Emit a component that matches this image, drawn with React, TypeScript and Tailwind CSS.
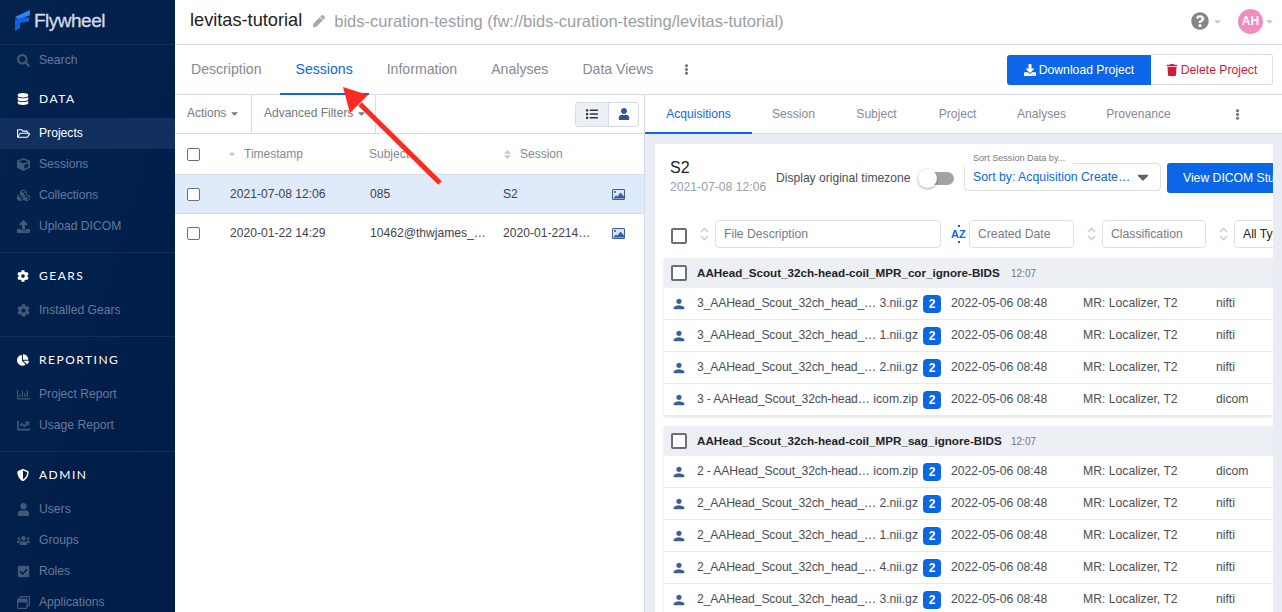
import type { ReactNode } from "react";
import { MdPerson } from "react-icons/md";
import {
  FaCaretDown,
  FaChartLine,
  FaChartPie,
  FaCheckSquare,
  FaCog,
  FaCube,
  FaCubes,
  FaDatabase,
  FaDownload,
  FaEllipsisV,
  FaList,
  FaPen,
  FaQuestionCircle,
  FaRegChartBar,
  FaRegFolderOpen,
  FaRegWindowRestore,
  FaSearch,
  FaShieldAlt,
  FaSort,
  FaTrash,
  FaUpload,
  FaUser,
  FaUsers,
} from "react-icons/fa";

function NavItem({ icon, label, active }: { icon: ReactNode; label: string; active?: boolean }) {
  return (
    <div
      className={`flex h-[31px] shrink-0 items-center text-[12.15px] ${
        active ? "bg-[#12305f] text-white" : "text-[#66799a]"
      }`}
    >
      <span className={`flex w-[39px] shrink-0 justify-center pl-[7px] text-[13px] ${active ? "text-white" : "text-[#435877]"}`}>
        {icon}
      </span>
      {label}
    </div>
  );
}

function NavHeading({ icon, label }: { icon: ReactNode; label: string }) {
  return (
    <div className="flex h-[42px] shrink-0 items-center pt-[4px] font-['Lato',sans-serif] text-[12px] tracking-[0.125em] text-white">
      <span className="flex w-[39px] shrink-0 justify-center pl-[7px] text-[12px]">{icon}</span>
      {label}
    </div>
  );
}

function Sidebar() {
  return (
    <aside className="flex h-[612px] w-[175px] shrink-0 flex-col overflow-hidden bg-gradient-to-br from-[#03234f] to-[#001c47]">
      <div className="flex h-[45px] shrink-0 items-center gap-[4px] border-b border-[#12305f] pb-[4px] pl-[15px]">
        <svg width="15" height="21" viewBox="0 0 15 21" aria-hidden="true">
          <path d="M0 7 L15 0 V5 L4 9.5 Z" fill="#2f86f5" />
          <path d="M0 9 L14 7 V11.5 L5 13 V18 L0 21 Z" fill="#0e62e0" />
        </svg>
        <span className="text-[19px] leading-none tracking-[-0.5px] text-[#d5dbe6] [-webkit-text-stroke:0.3px_#d5dbe6]">Flywheel</span>
      </div>
      <NavItem icon={<FaSearch />} label="Search" />
      <div className="flex shrink-0 flex-col border-b border-[#12305f] pb-[10px]">
        <NavHeading icon={<FaDatabase />} label="DATA" />
        <NavItem icon={<FaRegFolderOpen />} label="Projects" active />
        <NavItem icon={<FaCube />} label="Sessions" />
        <NavItem icon={<FaCubes />} label="Collections" />
        <NavItem icon={<FaUpload />} label="Upload DICOM" />
      </div>
      <div className="flex shrink-0 flex-col border-b border-[#12305f] pb-[10px]">
        <NavHeading icon={<FaCog />} label="GEARS" />
        <NavItem icon={<FaCog />} label="Installed Gears" />
      </div>
      <div className="flex shrink-0 flex-col border-b border-[#12305f] pb-[10px]">
        <NavHeading icon={<FaChartPie />} label="REPORTING" />
        <NavItem icon={<FaRegChartBar />} label="Project Report" />
        <NavItem icon={<FaChartLine />} label="Usage Report" />
      </div>
      <div className="flex shrink-0 flex-col">
        <NavHeading icon={<FaShieldAlt />} label="ADMIN" />
        <NavItem icon={<FaUser />} label="Users" />
        <NavItem icon={<FaUsers />} label="Groups" />
        <NavItem icon={<FaCheckSquare />} label="Roles" />
        <NavItem icon={<FaRegWindowRestore />} label="Applications" />
      </div>
    </aside>
  );
}

function Checkbox({ big }: { big?: boolean }) {
  return (
    <span
      className={`block shrink-0 bg-white ${
        big
          ? "h-[16px] w-[16px] rounded-[2px] border-2 border-[#6b6f75]"
          : "h-[13px] w-[13px] rounded-[2px] border border-[#6b6f75]"
      }`}
    />
  );
}

function PictureIcon() {
  return (
    <svg width="13" height="11" viewBox="0 0 13 11" aria-hidden="true">
      <rect x="0.5" y="0.5" width="12" height="10" rx="0.5" fill="#dbe6f5" stroke="#3a5f9c" />
      <circle cx="3" cy="3" r="1" fill="#2f5590" />
      <path d="M1 9.5 L4 6.5 L5.5 7.5 L8.5 3.5 L12 7.5 V9.5 Z" fill="#3a5f9c" />
    </svg>
  );
}

function SortChevrons() {
  return (
    <svg className="mt-[7px] shrink-0" width="13" height="14" viewBox="0 0 13 14" fill="none" stroke="#c9d0dc" strokeWidth="1.6" aria-hidden="true">
      <path d="M3 5 L6.5 1.5 L10 5" />
      <path d="M3 9 L6.5 12.5 L10 9" />
    </svg>
  );
}

function ProjectTabs() {
  const tabs = ["Description", "Sessions", "Information", "Analyses", "Data Views"];
  return (
    <div className="flex h-[50px] shrink-0 items-stretch border-b border-[#d5dbe8] pr-[9px]">
      <div className="flex gap-[2px]">
        {tabs.map((t) => (
          <div
            key={t}
            className={`-mb-px flex items-center border-b-2 px-[16px] pt-[1px] text-[14.1px] ${
              t === "Sessions" ? "border-[#0c67e8] text-[#0c67e8]" : "border-transparent text-[#858a92]"
            }`}
          >
            {t}
          </div>
        ))}
      </div>
      <div className="ml-[12px] flex items-center text-[11px] text-[#6f747b]">
        <FaEllipsisV />
      </div>
      <div className="ml-auto flex items-center">
        <button className="flex h-[30px] w-[144px] items-center justify-center gap-[3px] rounded-l-[3px] bg-[#0c67e8] pt-[2px] text-[12.2px] text-white">
          <FaDownload className="-mt-[2px] text-[12px]" />
          Download Project
        </button>
        <button className="flex h-[31px] w-[122px] items-center justify-center gap-[3px] rounded-r-[3px] border border-l-0 border-[#d9dde3] bg-white pt-[2px] text-[12.2px] text-[#d5183a]">
          <FaTrash className="-mt-[2px] text-[12px]" />
          Delete Project
        </button>
      </div>
    </div>
  );
}

function SessionRow({ time, subject, session, selected }: { time: string; subject: string; session: string; selected?: boolean }) {
  return (
    <div
      className={`flex h-[39px] shrink-0 items-center text-[12.1px] text-[#3f4348] ${
        selected ? "border-b border-[#d5dbe8] bg-[#dfeafa]" : "bg-white"
      }`}
    >
      <span className="ml-[12px] w-[43px]">
        <Checkbox />
      </span>
      <span className="w-[140px]">{time}</span>
      <span className="w-[133px]">{subject}</span>
      <span className="w-[109px]">{session}</span>
      <PictureIcon />
    </div>
  );
}

function SessionList() {
  return (
    <section className="flex w-[470px] shrink-0 flex-col border-r border-[#d5dbe8] bg-white">
      <div className="flex h-[39px] shrink-0 items-stretch border-b border-[#d5dbe8] text-[12px] text-[#74787f]">
        <div className="flex w-[77px] items-center gap-[3px] border-r border-[#d5dbe8] pb-[2px] pl-[12px]">
          Actions <FaCaretDown className="text-[11px]" />
        </div>
        <div className="flex w-[124px] items-center gap-[3px] border-r border-[#d5dbe8] pb-[2px] pl-[12px]">
          Advanced Filters <FaCaretDown className="text-[11px]" />
        </div>
        <div className="ml-auto mr-[5px] flex items-center">
          <div className="flex h-[25px] w-[64px] overflow-hidden rounded-[3px] border border-[#d5dbe8] text-[12px] text-[#2f5590]">
            <span className="flex w-[33px] items-center justify-center border-r border-[#d5dbe8] bg-[#eceff4] text-[#333]">
              <FaList />
            </span>
            <span className="flex flex-1 items-center justify-center">
              <FaUser />
            </span>
          </div>
        </div>
      </div>
      <div className="flex h-[41px] shrink-0 items-center border-b border-[#d5dbe8] text-[12px] text-[#858a92]">
        <span className="ml-[12px] w-[40px]">
          <Checkbox />
        </span>
        <span className="flex w-[142px] items-center gap-[7px]">
          <FaCaretDown className="text-[10px] text-[#c4c8ce]" />
          Timestamp
        </span>
        <span className="w-[133px]">Subject</span>
        <span className="flex items-center gap-[7px]">
          <FaSort className="text-[11px] text-[#c4c8ce]" />
          Session
        </span>
      </div>
      <SessionRow time="2021-07-08 12:06" subject="085" session="S2" selected />
      <SessionRow time="2020-01-22 14:29" subject="10462@thwjames_…" session="2020-01-2214…" />
    </section>
  );
}

function DetailTabs() {
  const tabs = [
    { label: "Acquisitions", w: "w-[107px]" },
    { label: "Session", w: "w-[83px]" },
    { label: "Subject", w: "w-[83px]" },
    { label: "Project", w: "w-[79px]" },
    { label: "Analyses", w: "w-[89px]" },
    { label: "Provenance", w: "w-[105px]" },
  ];
  return (
    <div className="flex h-[39px] shrink-0 items-stretch border-b border-[#d5dbe8] bg-white text-[12.1px]">
      {tabs.map((t) => (
        <div
          key={t.label}
          className={`-mb-px flex items-center justify-center border-b-2 pt-[1px] ${t.w} ${
            t.label === "Acquisitions" ? "border-[#0c67e8] text-[#0c67e8]" : "border-transparent text-[#858a92]"
          }`}
        >
          {t.label}
        </div>
      ))}
      <div className="ml-[41px] flex items-center text-[11px] text-[#6f747b]">
        <FaEllipsisV />
      </div>
    </div>
  );
}

function FilterInput({ text, w, dark }: { text: string; w: string; dark?: boolean }) {
  return (
    <div
      className={`flex h-[28px] shrink-0 items-center rounded-[4px] border border-[#dcdfe4] bg-white pl-[8px] text-[12.2px] whitespace-nowrap ${w} ${
        dark ? "text-[#222]" : "text-[#777b82]"
      }`}
    >
      {text}
    </div>
  );
}

type FileRow = { name: string; tail: string; date: string; kind: string };

function Group({ title, time, rows }: { title: string; time: string; rows: FileRow[] }) {
  return (
    <div className="mb-[10px] ml-[9px] w-[609px] shrink-0 shadow-[0_1px_3px_rgba(0,0,0,0.12)]">
      <div className="flex h-[30px] items-center bg-[#eceff4] pl-[7px]">
        <span className="mr-[10px]">
          <Checkbox big />
        </span>
        <span className="w-[314px] whitespace-nowrap text-[11.65px] font-bold text-[#1f2226]">{title}</span>
        <span className="text-[10px] text-[#74787f]">{time}</span>
      </div>
      {rows.map((r, i) => (
        <div key={i} className="flex h-[32px] items-center border-b border-[#e8eaee] bg-white text-[12.2px] text-[#4a4e54]">
          <span className="flex w-[33px] shrink-0 justify-start pl-[7px] text-[16px] text-[#3a5f9c]">
            <MdPerson />
          </span>
          <span className="flex w-[221px] shrink-0 justify-between whitespace-nowrap pb-[1px]">
            <span className="tracking-[-0.15px]">{r.name}</span>
            <span>{r.tail}</span>
          </span>
          <span className="ml-[5px] flex h-[18px] w-[18px] shrink-0 items-center justify-center rounded-[4px] bg-[#0c67e8] text-[12px] font-bold text-white">
            2
          </span>
          <span className="ml-[10px] w-[132px] shrink-0 whitespace-nowrap pb-[1px]">{r.date}</span>
          <span className="w-[133px] shrink-0 whitespace-nowrap pb-[1px]">MR: Localizer, T2</span>
          <span className="pb-[1px]">{r.kind}</span>
        </div>
      ))}
    </div>
  );
}

const DATE = "2022-05-06 08:48";
const head3 = "3_AAHead_Scout_32ch_head_…";
const head2 = "2_AAHead_Scout_32ch_head_…";

const corRows: FileRow[] = [
  { name: head3, tail: "3.nii.gz", date: DATE, kind: "nifti" },
  { name: head3, tail: "1.nii.gz", date: DATE, kind: "nifti" },
  { name: head3, tail: "2.nii.gz", date: DATE, kind: "nifti" },
  { name: "3 - AAHead_Scout_32ch-head…", tail: "icom.zip", date: DATE, kind: "dicom" },
];

const sagRows: FileRow[] = [
  { name: "2 - AAHead_Scout_32ch-head…", tail: "icom.zip", date: DATE, kind: "dicom" },
  { name: head2, tail: "2.nii.gz", date: DATE, kind: "nifti" },
  { name: head2, tail: "1.nii.gz", date: DATE, kind: "nifti" },
  { name: head2, tail: "4.nii.gz", date: DATE, kind: "nifti" },
  { name: head2, tail: "3.nii.gz", date: DATE, kind: "nifti" },
];

function SessionCard() {
  return (
    <div className="ml-[10px] mt-[10px] h-[480px] w-[618px] shrink-0 overflow-hidden rounded-t-[3px] bg-white">
      <div className="flex h-[76px] items-start pl-[15px] pt-[12px]">
        <div className="w-[106px] shrink-0">
          <div className="text-[16px] leading-[23px] text-[#222]">S2</div>
          <div className="text-[12.2px] leading-[17px] text-[#9a9ea5]">2021-07-08 12:06</div>
        </div>
        <span className="mt-[13px] w-[142px] shrink-0 whitespace-nowrap text-[12.1px] text-[#4a4e54]">Display original timezone</span>
        <span className="relative mt-[16px] h-[13px] w-[36px] shrink-0 rounded-full bg-[#a3a3a3]">
          <span className="absolute left-0 top-[-3px] h-[19px] w-[19px] rounded-full bg-white shadow-[0_1px_3px_rgba(0,0,0,0.35)]" />
        </span>
        <div className="relative ml-[10px] mt-[7px] flex h-[28px] w-[197px] shrink-0 items-center justify-between whitespace-nowrap rounded-[4px] border border-[#dcdfe4] pl-[8px] pr-[8px] text-[12.3px] text-[#0c67e8]">
          Sort by: Acquisition Create…
          <FaCaretDown className="text-[18px] text-[#5f6369]" />
          <span className="absolute left-0 top-[-12px] whitespace-nowrap bg-white px-[8px] text-[9.1px] text-[#777b82]">Sort Session Data by...</span>
        </div>
        <button className="ml-[6px] mt-[7px] flex h-[30px] w-[120px] shrink-0 items-center whitespace-nowrap rounded-[3px] bg-[#0c67e8] pl-[16px] text-[12.2px] text-white">
          View DICOM Study
        </button>
      </div>
      <div className="flex h-[38px] items-start pl-[16px]">
        <span className="mt-[8px]">
          <Checkbox big />
        </span>
        <span className="ml-[11px] mr-[4px] flex">
          <SortChevrons />
        </span>
        <FilterInput text="File Description" w="w-[226px]" />
        <span className="relative ml-[10px] mr-[3px] mt-[7px] w-[15px] shrink-0 text-[11px] font-bold leading-[14px] text-[#0c67e8]">
          AZ
          <span className="absolute left-[7px] top-[-2px] h-[2px] w-[1.5px] bg-[#0c67e8]" />
          <span className="absolute bottom-[-2px] left-[7px] h-[2px] w-[1.5px] bg-[#0c67e8]" />
        </span>
        <FilterInput text="Created Date" w="w-[105px]" />
        <span className="ml-[11px] mr-[4px] flex">
          <SortChevrons />
        </span>
        <FilterInput text="Classification" w="w-[104px]" />
        <span className="ml-[11px] mr-[4px] flex">
          <SortChevrons />
        </span>
        <FilterInput text="All Types" w="w-[80px]" dark />
      </div>
      <Group title="AAHead_Scout_32ch-head-coil_MPR_cor_ignore-BIDS" time="12:07" rows={corRows} />
      <Group title="AAHead_Scout_32ch-head-coil_MPR_sag_ignore-BIDS" time="12:07" rows={sagRows} />
    </div>
  );
}

export default function App() {
  return (
    <div className="relative flex h-[612px] w-[1282px] overflow-hidden bg-white font-['Liberation_Sans',Arial,sans-serif]">
      <Sidebar />
      <main className="flex min-w-0 flex-1 flex-col">
        <header className="flex h-[45px] shrink-0 items-center border-b border-[#d5dbe8] pb-[2px] pl-[15px] pr-[7px]">
          <span className="text-[18.2px] text-[#222]">levitas-tutorial</span>
          <FaPen className="ml-[11px] text-[12px] text-[#a3a6ab]" />
          <span className="ml-[9px] text-[16.5px] text-[#9a9ea5]">bids-curation-testing (fw://bids-curation-testing/levitas-tutorial)</span>
          <div className="ml-auto flex items-center">
            <FaQuestionCircle className="text-[18px] text-[#858585]" />
            <FaCaretDown className="ml-[3px] text-[11px] text-[#c4c8ce]" />
            <span className="ml-[15px] flex h-[25px] w-[25px] items-center justify-center rounded-full bg-[#f08cc0] text-[12px] font-bold text-white">
              AH
            </span>
            <FaCaretDown className="ml-[1px] text-[11px] text-[#c4c8ce]" />
          </div>
        </header>
        <ProjectTabs />
        <div className="flex min-h-0 flex-1">
          <SessionList />
          <div className="flex min-w-0 flex-1 flex-col bg-[#e9edf3]">
            <DetailTabs />
            <SessionCard />
          </div>
        </div>
      </main>
      {/* annotation arrow over the tabs */}
      <svg className="absolute left-[335px] top-[80px]" width="115" height="110" viewBox="0 0 115 110" aria-hidden="true">
        <path d="M105 103 L25 24" stroke="#ff2a1f" strokeWidth="5" />
        <path d="M8 7 L33 15 L15 33 Z" fill="#ff2a1f" />
      </svg>
    </div>
  );
}
